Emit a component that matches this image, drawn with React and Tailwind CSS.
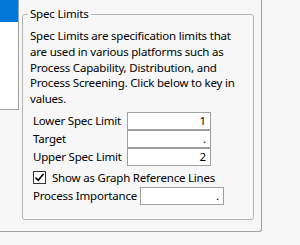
export default function App() {
  const font = { fontFamily: '"Noto Sans", "Open Sans", Arial, sans-serif' };
  return (
    <div className="w-[300px] h-[245px] bg-[#f7f7f7] overflow-hidden text-[11.5px] tracking-[-0.2px] text-black" style={font}>
      <div className="w-[262px] h-[232px] border-r border-b border-[#a0a0a0] rounded-br-[3px] flex items-start">
        <div className="w-[19px] h-[110px] bg-white border-r border-b border-[#a0a0a0]">
          <div className="w-[18px] h-[22px] bg-[#0078d7]"></div>
        </div>
        <div className="relative ml-[3px] mt-[14px] w-[232px] h-[206px] border border-[#b4b4b4] rounded-[3px] pl-[7px] pt-[13px]">
          <div className="absolute -top-[9px] left-[5px] px-[2px] bg-[#f7f7f7] leading-[16px] whitespace-nowrap">Spec Limits</div>
          <p className="leading-[15.75px] w-[208px]">
            Spec Limits are specification limits that are used in various platforms such as Process Capability, Distribution, and Process Screening. Click below to key in values.
          </p>
          <div className="mt-[5px] pl-[3px] flex flex-col whitespace-nowrap">
            <div className="flex items-center h-[18px]">
              <span className="w-[94px]">Lower Spec Limit</span>
              <div className="w-[84px] h-[18px] bg-white border border-[#a0a0a0] text-right pr-[4px] leading-[16px]">1</div>
            </div>
            <div className="flex items-center h-[18px]">
              <span className="w-[94px]">Target</span>
              <div className="w-[84px] h-[18px] bg-white border border-[#a0a0a0] text-right pr-[4px] leading-[16px]">.</div>
            </div>
            <div className="flex items-center h-[18px]">
              <span className="w-[94px]">Upper Spec Limit</span>
              <div className="w-[84px] h-[18px] bg-white border border-[#a0a0a0] text-right pr-[4px] leading-[16px]">2</div>
            </div>
            <div className="flex items-center h-[16px] mt-[4px]">
              <div className="w-[13px] h-[13px] bg-white border border-[#333333] flex items-center justify-center">
                <svg width="11" height="11" viewBox="0 0 11 11">
                  <path d="M1.5 5.5 L4.2 8.3 L9.5 2" fill="none" stroke="#000" strokeWidth="1.6" />
                </svg>
              </div>
              <span className="ml-[6px]">Show as Graph Reference Lines</span>
            </div>
            <div className="flex items-center h-[18px] mt-[1px]">
              <span className="w-[107px]">Process Importance</span>
              <div className="w-[84px] h-[18px] bg-white border border-[#a0a0a0] text-right pr-[4px] leading-[16px]">.</div>
            </div>
          </div>
        </div>
      </div>
    </div>
  );
}
